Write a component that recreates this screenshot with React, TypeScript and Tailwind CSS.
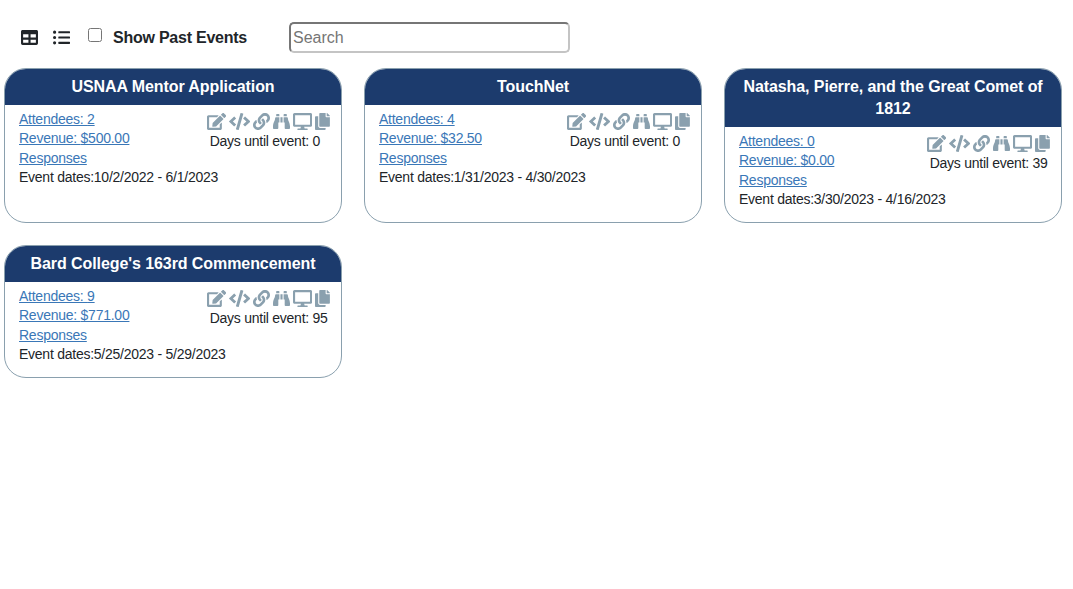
import { FaEdit, FaCode, FaLink, FaBinoculars, FaDesktop, FaCopy, FaTable, FaListUl } from "react-icons/fa";

type EventCard = {
  title: string;
  attendees: number;
  revenue: string;
  days: number;
  dates: string;
};

const EVENTS: EventCard[] = [
  { title: "USNAA Mentor Application", attendees: 2, revenue: "$500.00", days: 0, dates: "10/2/2022 - 6/1/2023" },
  { title: "TouchNet", attendees: 4, revenue: "$32.50", days: 0, dates: "1/31/2023 - 4/30/2023" },
  { title: "Natasha, Pierre, and the Great Comet of 1812", attendees: 0, revenue: "$0.00", days: 39, dates: "3/30/2023 - 4/16/2023" },
  { title: "Bard College's 163rd Commencement", attendees: 9, revenue: "$771.00", days: 95, dates: "5/25/2023 - 5/29/2023" },
];

function Card({ event }: { event: EventCard }) {
  return (
    <div className="overflow-hidden rounded-[22px] border border-[#8aa0ae] bg-white">
      <div className="bg-[#1c3b6d] px-[14px] py-[7px] text-center text-[16px] leading-[22px] font-bold tracking-[-0.08px] text-white">
        {event.title}
      </div>
      <div className="flow-root pt-[4.7px] pr-[11px] pb-[12.3px] pl-[14px] text-[14px] leading-[19.5px] tracking-[-0.25px] text-[#212529]">
        <div className="float-right w-fit">
          <div className="mt-[3px] mb-[2px] flex h-[17px] items-center gap-[3px] text-[#8aa0ae]">
            <FaEdit className="h-[17px] w-[19.1px] shrink-0" />
            <FaCode className="h-[17px] w-[21.25px] shrink-0" />
            <FaLink className="h-[17px] w-[17px] shrink-0" />
            <FaBinoculars className="h-[17px] w-[17px] shrink-0" />
            <FaDesktop className="h-[17px] w-[19.1px] shrink-0" />
            <FaCopy className="h-[17px] w-[14.9px] shrink-0" />
          </div>
          <div className="pl-[3px]">Days until event: {event.days}</div>
        </div>
        <a href="#" className="block w-fit text-[#3a77b7] underline">Attendees: {event.attendees}</a>
        <a href="#" className="block w-fit text-[#3a77b7] underline">Revenue: {event.revenue}</a>
        <a href="#" className="block w-fit text-[#3a77b7] underline">Responses</a>
        <div>Event dates:{event.dates}</div>
      </div>
    </div>
  );
}

export default function App() {
  return (
    <div className="min-h-[589px] bg-white font-['Liberation_Sans',Arial,sans-serif]">
      <div className="flex h-[68px] items-center pt-[6px] pl-[21px] text-[#212529]">
        <FaTable className="h-[17px] w-[17px]" />
        <FaListUl className="ml-[15px] h-[17px] w-[17px]" />
        <input type="checkbox" className="mb-[4px] ml-[18px] h-[14px] w-[14px]" />
        <span className="mt-[1px] ml-[11px] text-[16px] font-bold tracking-[-0.24px]">Show Past Events</span>
        <input
          placeholder="Search"
          className="ml-[42px] h-[31px] w-[281px] rounded-[5px] border-2 border-t-[#767676] border-r-[#c4c4c4] border-b-[#c4c4c4] border-l-[#767676] px-[2px] pt-[1px] text-[16px] outline-none placeholder:text-[#757575]"
        />
      </div>
      <div className="grid grid-cols-[338px_338px_338px] gap-[22px] pl-[4px]">
        {EVENTS.map((event) => (
          <Card key={event.title} event={event} />
        ))}
      </div>
    </div>
  );
}
